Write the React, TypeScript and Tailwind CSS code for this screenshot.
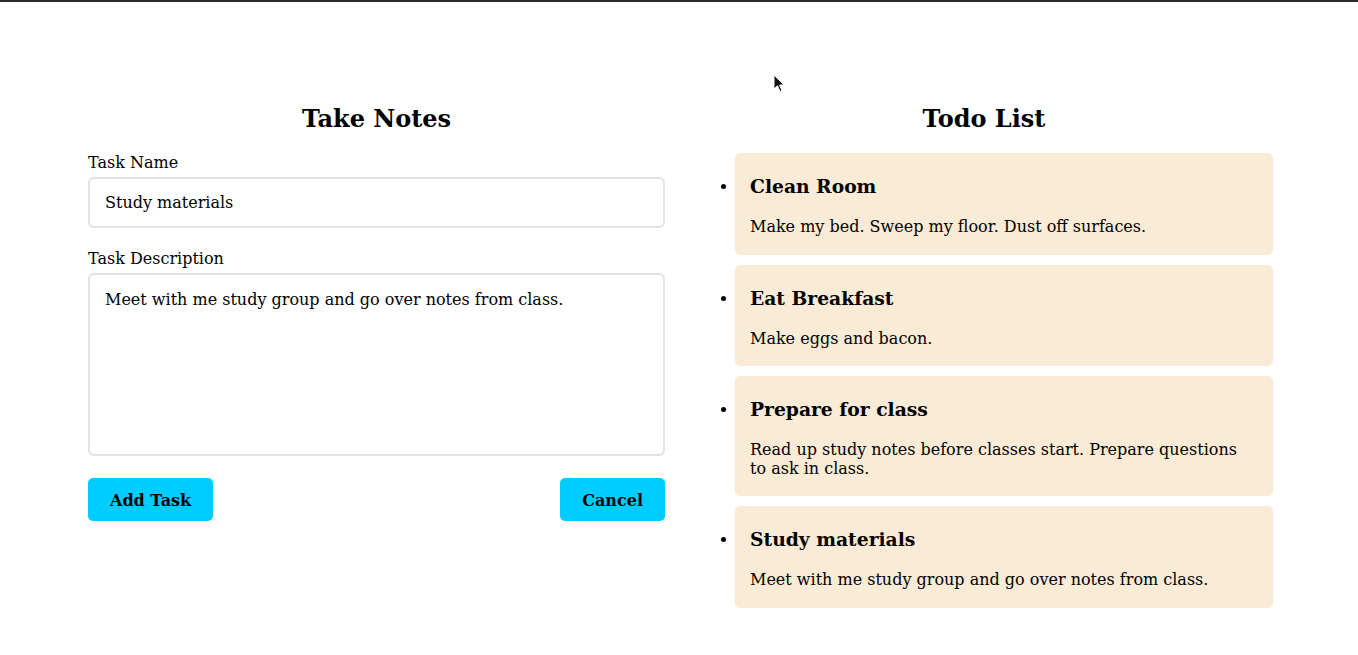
import React from "react";

const todos = [
  { title: "Clean Room", desc: "Make my bed. Sweep my floor. Dust off surfaces." },
  { title: "Eat Breakfast", desc: "Make eggs and bacon." },
  {
    title: "Prepare for class",
    desc: "Read up study notes before classes start. Prepare questions to ask in class.",
  },
  { title: "Study materials", desc: "Meet with me study group and go over notes from class." },
];

const serif = { fontFamily: '"DejaVu Serif", "Liberation Serif", serif' };

function NoteForm() {
  return (
    <section className="flex flex-col">
      <h2 className="text-center text-[24px] font-bold leading-[28px] mb-[21px]">Take Notes</h2>
      <label className="text-[16px] leading-[18.6px] mb-[4px]">Task Name</label>
      <input
        defaultValue="Study materials"
        className="h-[51px] w-full rounded-[6px] border-2 border-[#e2e2e2] px-[15px] text-[16px] leading-[18.6px] outline-none"
        style={serif}
      />
      <label className="text-[16px] leading-[18.6px] mt-[22px] mb-[5px]">Task Description</label>
      <textarea
        defaultValue="Meet with me study group and go over notes from class."
        className="h-[183px] w-full resize-none rounded-[6px] border-2 border-[#e2e2e2] px-[15px] pt-[16px] text-[16px] leading-[18.6px] outline-none"
        style={serif}
      />
      <div className="mt-[22px] flex justify-between">
        <button
          className="h-[43px] rounded-[5px] bg-[#00ccff] px-[22px] pt-[3px] text-[16px] font-bold"
          style={serif}
        >
          Add Task
        </button>
        <button
          className="h-[43px] rounded-[5px] bg-[#00ccff] px-[22px] pt-[3px] text-[16px] font-bold"
          style={serif}
        >
          Cancel
        </button>
      </div>
    </section>
  );
}

function TodoList() {
  return (
    <section className="flex flex-col">
      <h2 className="text-center text-[24px] font-bold leading-[28px] mb-[20px]">Todo List</h2>
      <ul className="flex flex-col gap-[10px]">
        {todos.map((t) => (
          <li key={t.title} className="flex">
            <span className="w-[40px] shrink-0 pl-[26px] pt-[31px]">
              <span className="block h-[5px] w-[5px] rounded-full bg-black" />
            </span>
            <div className="flex-1 rounded-[5px] bg-[#faebd7] px-[15px] pt-[3px] pb-[3px]">
              <h3 className="mt-[19px] mb-[21px] text-[18.72px] font-bold leading-[22px]">{t.title}</h3>
              <p className="mb-[15px] pr-[20px] text-[16px] leading-[18.6px]">{t.desc}</p>
            </div>
          </li>
        ))}
      </ul>
    </section>
  );
}

export default function App() {
  return (
    <div className="relative min-h-screen bg-white text-black leading-[18.6px]" style={serif}>
      <div className="h-[2px] bg-[#2b2b2b]" />
      <main className="grid grid-cols-[577px_578px] gap-[30px] pl-[88px] pt-[103px]">
        <NoteForm />
        <TodoList />
      </main>
      <svg
        className="pointer-events-none absolute left-[773px] top-[74px]"
        width="12"
        height="19"
        viewBox="0 0 12 19"
      >
        <path d="M1 1 L1 15 L4.5 11.8 L7 17.5 L9 16.6 L6.6 11 L11 11 Z" fill="#111" stroke="#fff" strokeWidth="1" />
      </svg>
    </div>
  );
}
